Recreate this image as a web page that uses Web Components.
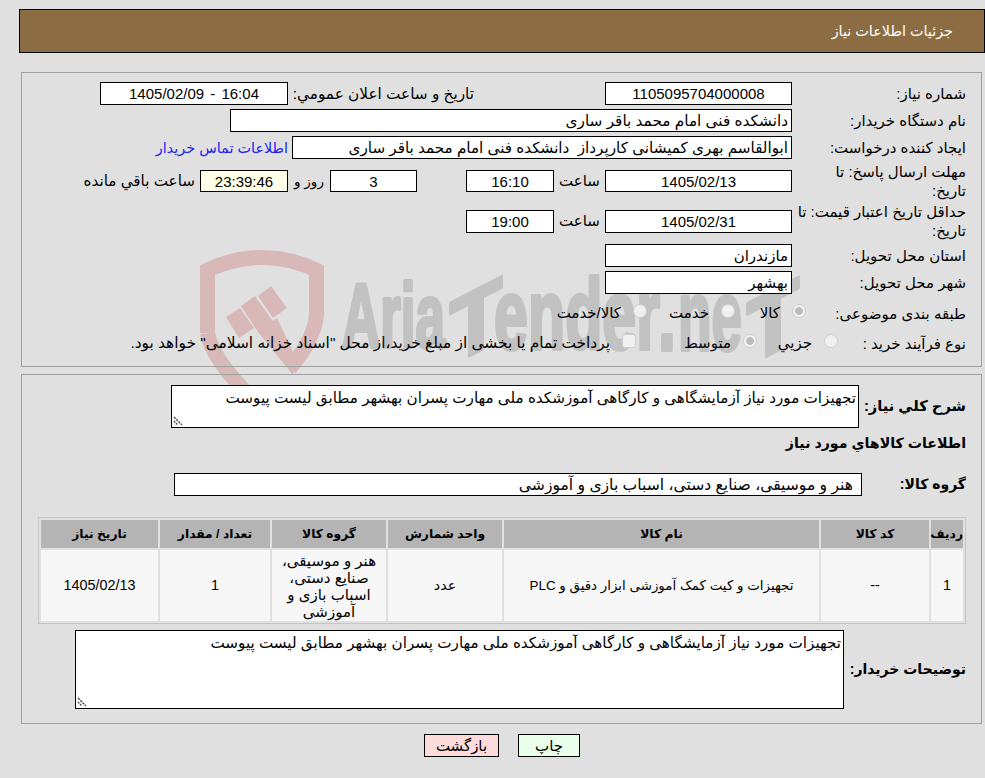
<!DOCTYPE html>
<html lang="fa" dir="rtl">
<head>
<meta charset="utf-8">
<title>جزئیات اطلاعات نیاز</title>
<style>
html, body {
	margin: 0;
	padding: 0;
	background: #e0e0e0;
	color: #000;
	font: 15px "Liberation Sans", "DejaVu Sans", sans-serif;
	overflow: hidden;
}

main {
	position: relative;
	z-index: 1;
	display: block;
	padding: 9px 0 0 0;
}

at-panel.first {
	margin-top: 19px;
}
</style>
</head>
<body>
<script>
(() => {

const define = (name, styles, markup) => {
	customElements.define(name, class extends HTMLElement {
		constructor() {
			super();
			this.attachShadow({ mode: 'open' });
			this.shadowRoot.innerHTML = `<style>${styles}</style>${markup}`;
		}

		connectedCallback() {
			const label = this.shadowRoot.querySelector('[data-label]');

			if (label) {
				label.textContent = this.getAttribute('label');
			}
		}
	});
};

define('at-header', `
:host {
	display: flex;
	align-items: center;
	box-sizing: border-box;
	height: 44px;
	margin-left: 19px;
	padding-right: 31px;
	border: 1px solid #000;
	background: #8c6c42;
	color: #fff;
	font-size: 14.4px;
}
`, `<slot></slot>`);

define('at-panel', `
:host {
	display: flex;
	flex-direction: column;
	gap: 4px;
	box-sizing: border-box;
	width: 961px;
	margin: 7px 3px 0 0;
	padding: 9px 15px 0 15px;
	border: 1px solid #a0a0a0;
}
`, `<slot></slot>`);

define('at-row', `
:host {
	display: flex;
	align-items: center;
	min-height: var(--h, 23px);
}

.label {
	flex: 0 0 var(--label, 174px);
	font-size: var(--lfs, 15px);
	line-height: 19px;
	white-space: pre-line;
}

:host([bold]) .label {
	font-weight: 700;
	white-space: nowrap;
}

.body {
	display: flex;
	align-items: center;
	flex: 1 1 auto;
}
`, `<div class="label" data-label></div><div class="body"><slot></slot></div>`);

define('at-field', `
:host {
	display: flex;
	align-items: center;
	justify-content: center;
	box-sizing: border-box;
	flex: 0 0 var(--w);
	height: var(--fh, 23px);
	padding: 0 3px;
	border: 1px solid #000;
	background: var(--bg, #fff);
	white-space: pre;
}

:host([start]) {
	justify-content: flex-start;
}
`, `<slot></slot>`);

define('at-text', `
:host {
	display: block;
	flex: 0 0 var(--w, auto);
	box-sizing: border-box;
	margin-right: var(--mr, 0);
	text-align: var(--align, center);
	white-space: nowrap;
}
`, `<slot></slot>`);

define('at-note', `
:host {
	position: relative;
	display: block;
	flex: 0 0 var(--w);
	box-sizing: border-box;
	height: var(--nh);
	padding: 2px;
	overflow: hidden;
	border: 1px solid #000;
	background: #fff;
	font-size: 15.2px;
	line-height: 19px;
}

svg {
	position: absolute;
	bottom: 1px;
	left: 1px;
}
`, `<slot></slot>
<svg width="10" height="10" viewBox="0 0 10 10" fill="none" stroke="#555" stroke-width="1.4">
	<path d="M1 1 L9 9" stroke-dasharray="2.4 0.8"/>
	<path d="M1 5 L5 9" stroke-dasharray="2 0.8"/>
</svg>`);

define('at-radio', `
:host {
	display: flex;
	align-items: center;
	flex: 0 0 var(--w);
	gap: var(--gap, 12px);
	font-size: var(--fs, 15px);
	white-space: nowrap;
}

i {
	display: block;
	flex: 0 0 14px;
	box-sizing: border-box;
	height: 14px;
	margin-bottom: 4px;
	border: 1px solid #cfcfcf;
	border-radius: 50%;
	background: #f0f0f0;
}

:host([checked]) i {
	background: radial-gradient(circle, #bcbcbc 0 3.5px, #f2f2f2 4.2px);
}

:host([square]) i {
	border-radius: 3px;
}
`, `<i></i><span><slot></slot></span>`);

define('at-items', `
:host {
	display: block;
	margin: 21px 0 0 1px;
}

table {
	table-layout: fixed;
	width: 928px;
	border: 1px solid #c6c6c6;
	border-spacing: 2px;
}

th {
	height: 28px;
	padding: 0;
	background: #b4b4b4;
	font-size: 12.3px;
}

td {
	height: 71px;
	padding: 0 6px;
	box-sizing: border-box;
	background: #f7f7f7;
	text-align: center;
	font-size: 14.4px;
	line-height: 17px;
}

.name {
	font-size: 13.4px;
}

.group {
	padding: 0 2px;
	font-size: 15px;
}
`, `
<table>
	<colgroup>
		<col style="width:32px"><col style="width:108px"><col style="width:315px"><col style="width:114px"><col style="width:114px"><col style="width:110px"><col style="width:117px">
	</colgroup>
	<tr>
		<th>ردیف</th><th>کد کالا</th><th>نام کالا</th><th>واحد شمارش</th><th>گروه کالا</th><th>تعداد / مقدار</th><th>تاریخ نیاز</th>
	</tr>
	<tr>
		<td>1</td><td>--</td><td class="name">تجهیزات و کیت کمک آموزشی ابزار دقیق و PLC</td><td>عدد</td><td class="group">هنر و موسیقی، صنایع دستی، اسباب بازی و آموزشی</td><td>1</td><td>1405/02/13</td>
	</tr>
</table>`);

define('at-button', `
:host {
	display: block;
}

button {
	box-sizing: border-box;
	width: var(--w);
	height: 23px;
	padding: 0;
	border: 1px solid #000;
	background: var(--bg);
	color: #000;
	font: inherit;
}
`, `<button type="button"><slot></slot></button>`);

define('at-actions', `
:host {
	display: flex;
	justify-content: center;
	gap: 19px;
	margin-top: 10px;
	padding-left: 19px;
}
`, `<slot></slot>`);

define('at-watermark', `
:host {
	position: absolute;
	top: 0;
	left: 0;
	z-index: 0;
	display: block;
	width: 985px;
	height: 440px;
	direction: ltr;
}

svg {
	display: block;
}

text {
	font: 700 90px "Liberation Sans", sans-serif;
	fill: #c2c2c2;
	stroke: #c2c2c2;
	stroke-width: 4px;
	stroke-linejoin: round;
}

.big {
	font-size: 100px;
}
`, `
<svg width="985" height="440" viewBox="0 0 985 440">
	<g fill="none" stroke="#d9b8b8" stroke-width="15">
		<path d="M207.5 333 L207.5 270 Q262 245 316.5 270 L316.5 315 Q314 340 290 368"/>
		<path d="M207.5 333 Q212 360 256 402"/>
	</g>
	<g fill="#d9b8b8">
		<path d="M226 317 L240 308 L254 328 L239 338 Z"/>
		<path d="M241 306 L255 296 L277 327 L258 332 Z"/>
		<path d="M258 296 L271 286 L287 308 L273 318 Z"/>
		<path d="M258 332 L277 318 L297 360 L293 375 Z"/>
	</g>
	<text x="342" y="347" textLength="103" lengthAdjust="spacingAndGlyphs">Aria</text>
	<text transform="translate(480 350) skewY(-27)" x="-30" y="0" textLength="52" lengthAdjust="spacingAndGlyphs">T</text>
	<text class="big" x="494" y="349" textLength="166" lengthAdjust="spacingAndGlyphs">ender</text>
	<text class="big" x="658" y="350" textLength="18" lengthAdjust="spacingAndGlyphs">.</text>
	<text class="big" x="678" y="350" textLength="64" lengthAdjust="spacingAndGlyphs">ne</text>
	<text transform="translate(774 352) skewY(-27)" x="-27" y="0" textLength="52" lengthAdjust="spacingAndGlyphs">T</text>
</svg>`);

document.body.innerHTML = `
<at-watermark></at-watermark>
<main>
	<at-header>جزئیات اطلاعات نیاز</at-header>

	<at-panel class="first" style="padding-bottom:12px">
		<at-row label="شماره نیاز:">
			<at-field style="--w:187px">1105095704000008</at-field>
			<at-text style="--w:186px;--mr:131px;--align:right;font-size:15.3px">تاریخ و ساعت اعلان عمومي:</at-text>
			<at-field style="--w:188px;word-spacing:2px">16:04 - 1405/02/09</at-field>
		</at-row>
		<at-row label="نام دستگاه خریدار:">
			<at-field start style="--w:562px;font-size:15.3px">دانشکده فنی امام محمد باقر ساری</at-field>
		</at-row>
		<at-row label="ایجاد کننده درخواست:">
			<at-field start style="--w:500px;font-size:15.2px">ابوالقاسم بهری کمیشانی کارپرداز  دانشکده فنی امام محمد باقر ساری</at-field>
			<at-text style="--mr:4px;color:#2020f0;font-size:14.4px">اطلاعات تماس خریدار</at-text>
		</at-row>
		<at-row label="مهلت ارسال پاسخ: تا&#10;تاریخ:" style="--h:38px;margin-top:-1px">
			<at-field style="--w:187px;--fh:22px">1405/02/13</at-field>
			<at-text style="--w:51px">ساعت</at-text>
			<at-field style="--w:88px;--fh:22px">16:10</at-field>
			<at-field style="--w:87px;--fh:22px;margin-right:49px">3</at-field>
			<at-text style="--w:42px;font-size:13.5px">روز و</at-text>
			<at-field style="--w:88px;--fh:22px;--bg:#ffffe8">23:39:46</at-field>
			<at-text style="--mr:5px;font-size:15.2px">ساعت باقي مانده</at-text>
		</at-row>
		<at-row label="حداقل تاریخ اعتبار قیمت: تا&#10;تاریخ:" style="--h:38px;margin-top:-2px">
			<at-field style="--w:187px">1405/02/31</at-field>
			<at-text style="--w:51px">ساعت</at-text>
			<at-field style="--w:88px">19:00</at-field>
		</at-row>
		<at-row label="استان محل تحویل:">
			<at-field start style="--w:187px">مازندران</at-field>
		</at-row>
		<at-row label="شهر محل تحویل:">
			<at-field start style="--w:187px">بهشهر</at-field>
		</at-row>
		<at-row label="طبقه بندی موضوعی:" style="--h:30px">
			<at-radio checked style="--w:71px;margin-right:-14px">کالا</at-radio>
			<at-radio style="--w:88px">خدمت</at-radio>
			<at-radio>کالا/خدمت</at-radio>
		</at-row>
		<at-row label="نوع فرآیند خرید :" style="--h:22px">
			<at-radio style="--w:81px;margin-right:-46px">جزیي</at-radio>
			<at-radio checked style="--w:121px">متوسط</at-radio>
			<at-radio square style="--fs:15.4px">پرداخت تمام یا بخشی از مبلغ خرید،از محل "اسناد خزانه اسلامی" خواهد بود.</at-radio>
		</at-row>
	</at-panel>

	<at-panel style="padding-top:10px;padding-bottom:14px;gap:0">
		<at-row bold label="شرح کلي نیاز:" style="--label:107px;--lfs:14.7px">
			<at-note style="--w:688px;--nh:43px">تجهیزات مورد نیاز آزمایشگاهی و کارگاهی آموزشکده ملی مهارت پسران بهشهر مطابق لیست پیوست</at-note>
		</at-row>
		<at-row bold label="اطلاعات کالاهاي مورد نیاز" style="--h:30px;--label:100%;--lfs:14.2px"></at-row>
		<at-row bold label="گروه کالا:" style="--label:104px;--lfs:14px;margin-top:15px">
			<at-field start style="--w:688px;padding-right:8px;font-size:15.6px">هنر و موسیقی، صنایع دستی، اسباب بازی و آموزشی</at-field>
		</at-row>
		<at-items></at-items>
		<at-row bold label="توضیحات خریدار:" style="--label:122px;--lfs:14px;margin-top:6px">
			<at-note style="--w:769px;--nh:79px">تجهیزات مورد نیاز آزمایشگاهی و کارگاهی آموزشکده ملی مهارت پسران بهشهر مطابق لیست پیوست</at-note>
		</at-row>
	</at-panel>

	<at-actions>
		<at-button style="--w:62px;--bg:#eaffea">چاپ</at-button>
		<at-button style="--w:75px;--bg:#ffdcdc">بازگشت</at-button>
	</at-actions>
</main>`;

})();
</script>
</body>
</html>
